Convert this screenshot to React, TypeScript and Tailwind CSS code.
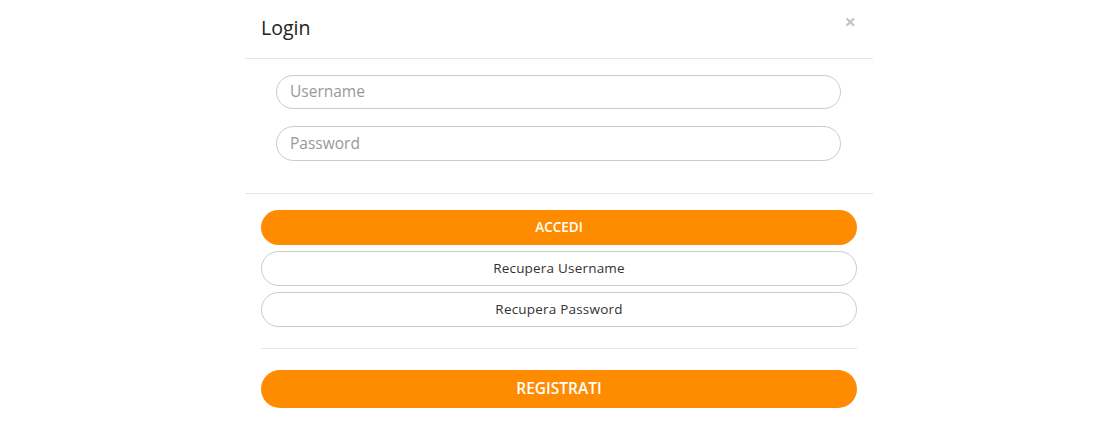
import React from "react";

export default function App() {
  return (
    <div className="w-[1118px] h-[424px] bg-white overflow-hidden" style={{ fontFamily: '"Open Sans", "Noto Sans", sans-serif' }}>
      <div className="mx-auto w-[628px] h-[423px] bg-white rounded-[14px] flex flex-col">
        <div className="h-[59px] flex items-center justify-between pl-[16px] pr-[17px] border-b border-[#e5e5e5]">
          <span className="text-[19.5px] text-[#222] mt-[-2px]">Login</span>
          <span className="text-[20px] font-bold text-[#c4c4c4] leading-none mt-[-14px]">×</span>
        </div>
        <div className="pl-[31px] pr-[32px] pt-[16px] pb-[32px] flex flex-col gap-[17px] border-b border-[#e5e5e5]">
          <div className="h-[34px] rounded-full border border-[#cccccc] flex items-center px-[13px] text-[15.5px] text-[#999]">Username</div>
          <div className="h-[35px] rounded-full border border-[#cccccc] flex items-center px-[13px] text-[15.5px] text-[#999]">Password</div>
        </div>
        <div className="px-[16px] pt-[16px] flex flex-col">
          <div className="h-[35px] rounded-full bg-[#ff8c00] flex items-center justify-center text-white text-[13.5px] font-semibold">ACCEDI</div>
          <div className="mt-[6px] h-[35px] rounded-full border border-[#cccccc] flex items-center justify-center text-[#333] text-[13.5px] tracking-[0.2px]">Recupera Username</div>
          <div className="mt-[6px] h-[35px] rounded-full border border-[#cccccc] flex items-center justify-center text-[#333] text-[13.5px] tracking-[0.2px]">Recupera Password</div>
          <div className="mt-[21px] border-t border-[#e8e8e8]"></div>
          <div className="mt-[21px] h-[38px] rounded-full bg-[#ff8c00] flex items-center justify-center text-white text-[15.5px] font-semibold">REGISTRATI</div>
        </div>
      </div>
    </div>
  );
}
